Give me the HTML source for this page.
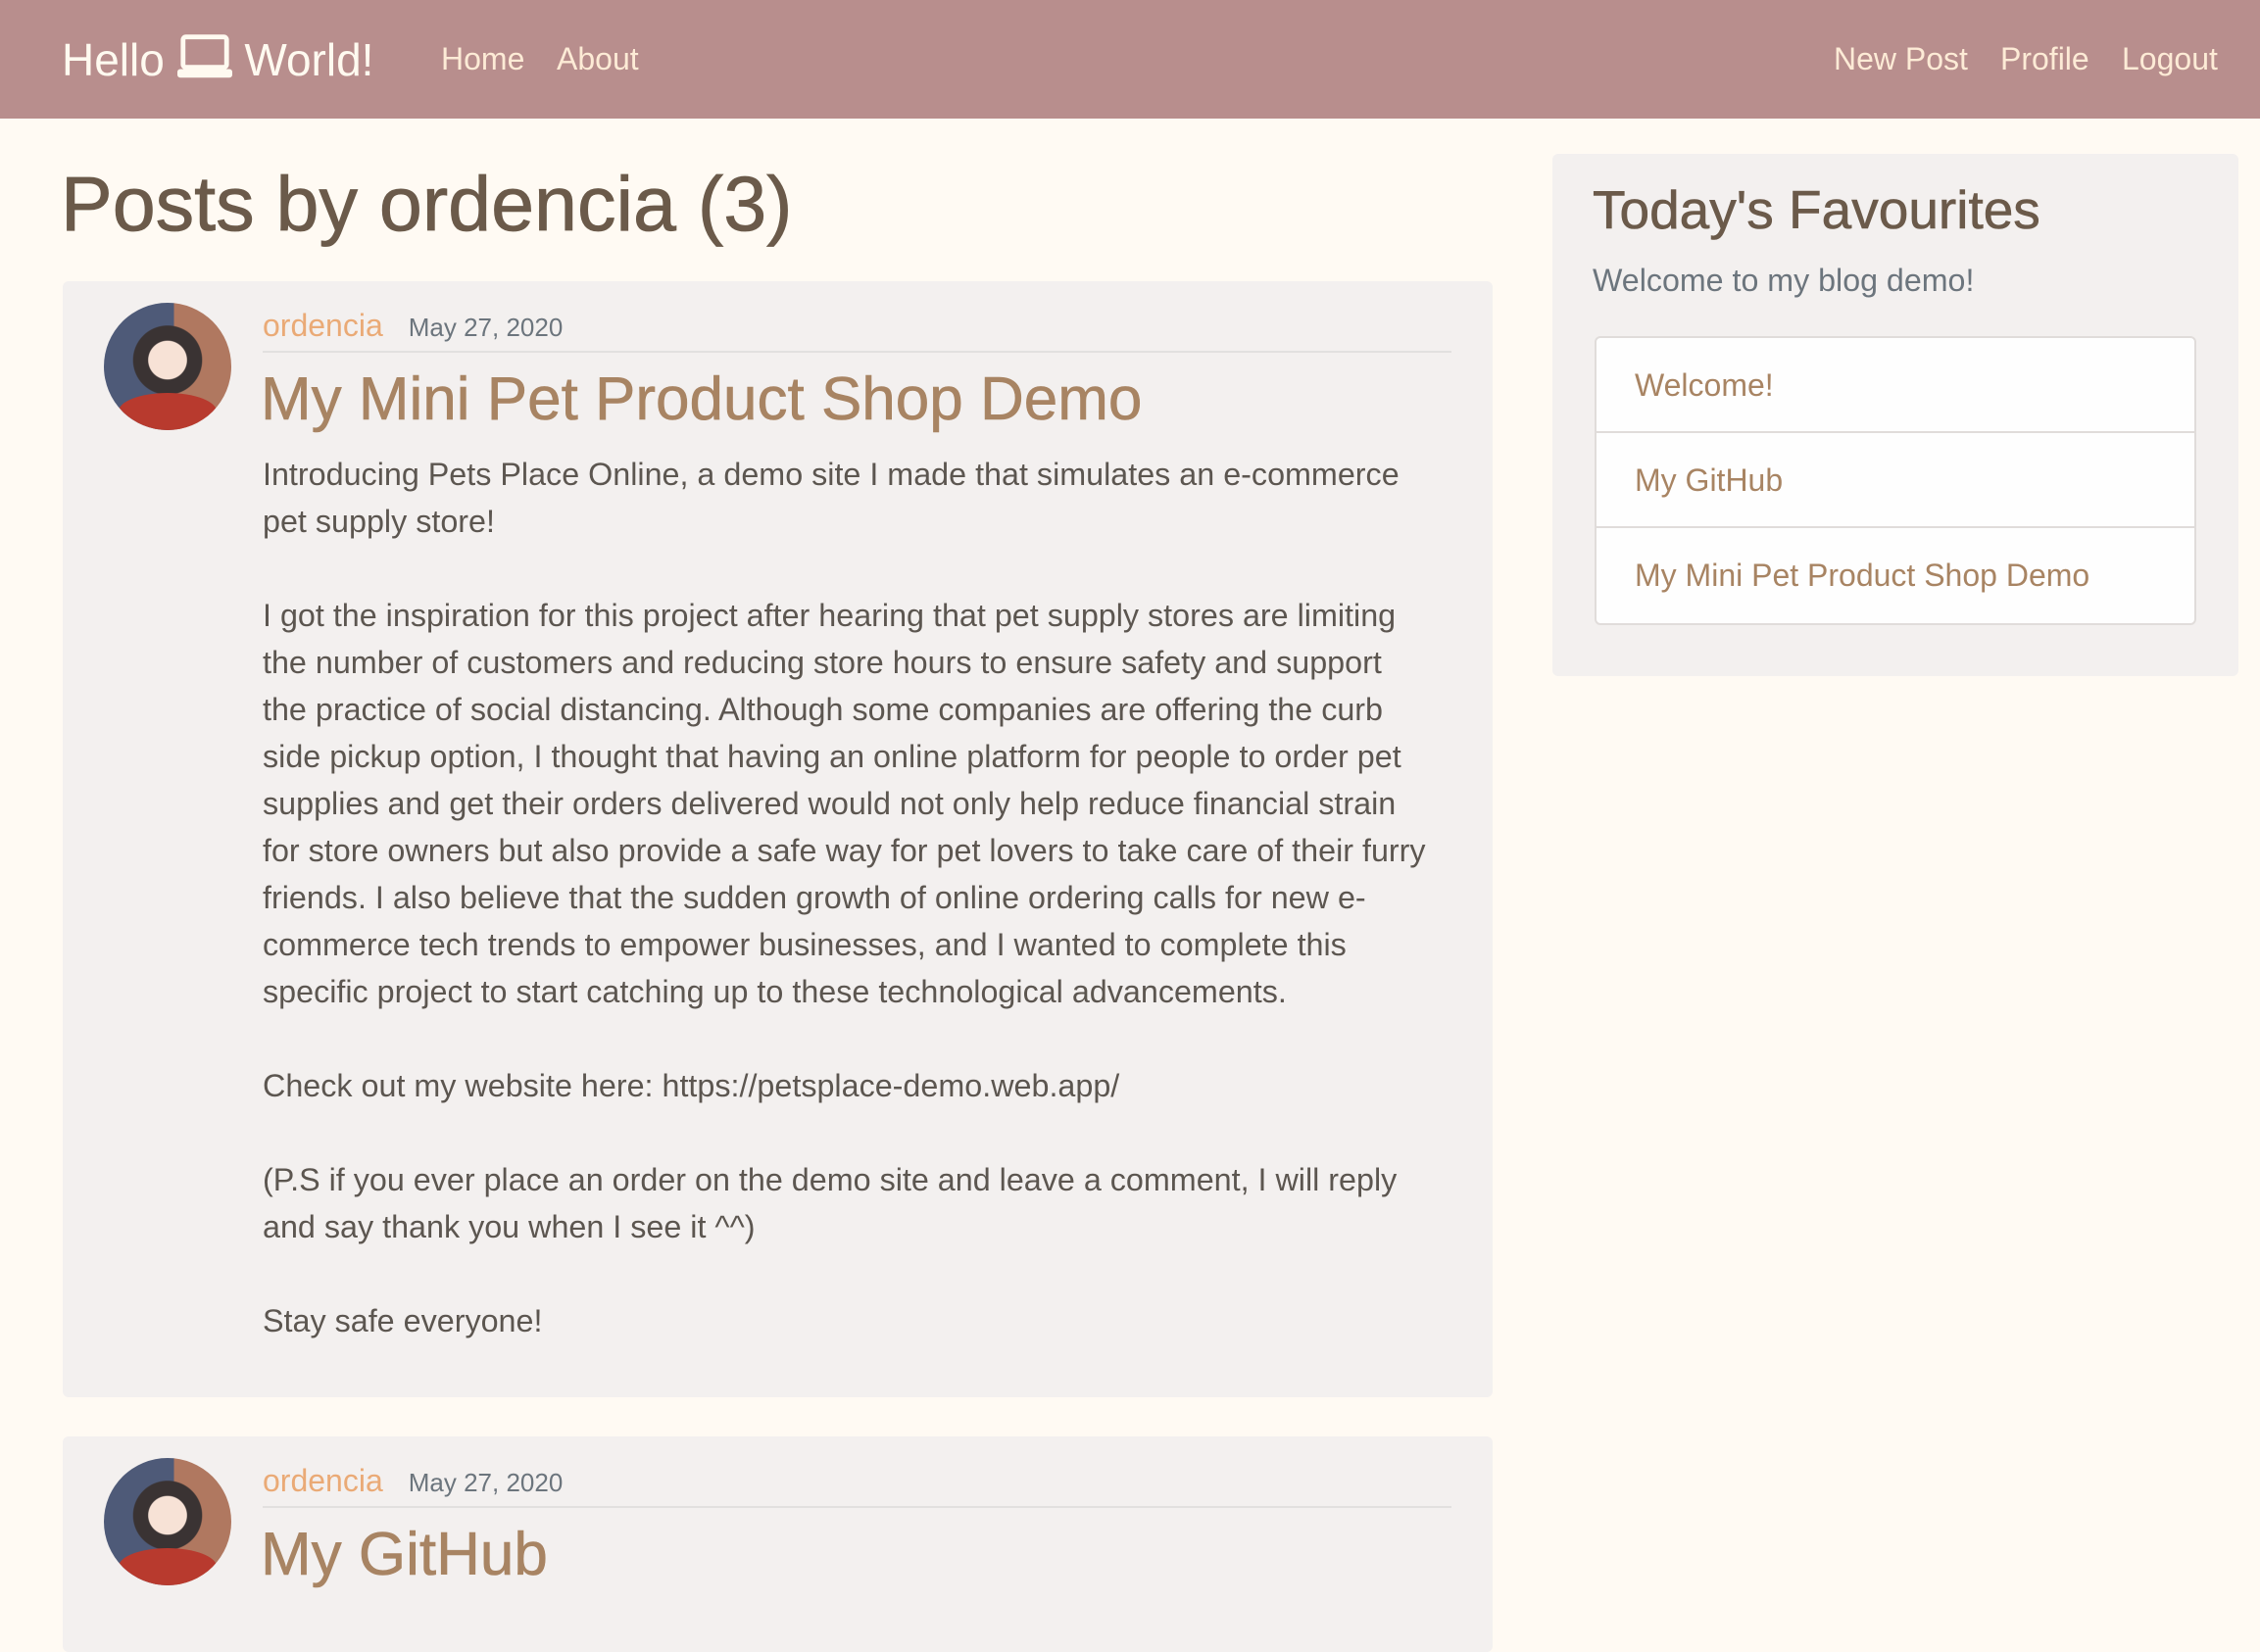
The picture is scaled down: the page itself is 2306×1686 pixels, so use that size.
<!DOCTYPE html>
<html><head><meta charset="utf-8"><style>
*{margin:0;padding:0;box-sizing:border-box}
body{width:2306px;height:1640px;overflow:hidden;background:#fffaf3;font-family:"Liberation Sans",sans-serif;position:relative}
.nav{position:absolute;left:0;top:0;width:2306px;height:121px;background:#b88e8d}
.a{position:absolute;white-space:nowrap}
.brand{color:#fffaf0;font-size:46px;top:34px}
.nl{color:#fdebd6;font-size:32px;top:42px}
.card{position:absolute;left:64px;width:1459px;background:#f3f0ef;border-radius:6px}
.av{position:absolute;left:106px;width:130px;height:130px;border-radius:50%;overflow:hidden;background:radial-gradient(circle at 50% 45%,#f7e2d6 0 20%,#3a3333 21% 36%,transparent 37%),linear-gradient(90deg,#4e5a78 0 55%,#b07860 55% 100%)}
.av:after{content:"";position:absolute;left:15px;bottom:0;width:100px;height:38px;background:#b83a2e;border-radius:50% 50% 0 0}
.on{color:#eaaa76;font-size:32px}
.dt{color:#6c757d;font-size:26px}
.hr{position:absolute;left:268px;width:1213px;height:2px;background:#e2e0df}
.tt{color:#a88463;font-size:62px}
.body{position:absolute;left:268px;top:460px;color:#5c5650;font-size:32.3px;line-height:48px;white-space:nowrap}
.side{position:absolute;left:1584px;top:157px;width:700px;height:533px;background:#f3f0ef;border-radius:6px}
.lg{position:absolute;left:1627px;top:343px;width:614px;height:295px;background:#fefefe;border:2px solid #e0dcda;border-radius:6px}
.li{height:97px;border-bottom:2px solid #e0dcda;color:#a88463;font-size:32px;padding-left:39px;line-height:97px}
</style></head><body>
<div class="nav"></div>
<div class="a brand" style="left:63px">Hello <svg width="56" height="46" viewBox="0 0 58 46" style="vertical-align:-4px"><rect x="6" y="2" width="46" height="32" rx="3" fill="none" stroke="#fffaf0" stroke-width="5"/><rect x="0" y="36" width="58" height="9" rx="3" fill="#fffaf0"/></svg> World!</div>
<div class="a nl" style="left:450px">Home</div>
<div class="a nl" style="left:568px">About</div>
<div class="a nl" style="left:1871px">New Post</div>
<div class="a nl" style="left:2041px">Profile</div>
<div class="a nl" style="left:2165px">Logout</div>

<div class="a" style="left:62px;top:162px;font-size:79px;color:#6b5a4a;-webkit-text-stroke:0.8px #6b5a4a">Posts by ordencia (3)</div>

<div class="card" style="top:287px;height:1139px"></div>
<div class="av" style="top:309px"></div>
<div class="a" style="left:268px;top:314px"><span class="on">ordencia</span><span class="dt" style="margin-left:26px">May 27, 2020</span></div>
<div class="hr" style="top:358px"></div>
<div class="a tt" style="left:266px;top:372px;-webkit-text-stroke:0.6px #a88463">My Mini Pet Product Shop Demo</div>
<div class="body">Introducing Pets Place Online, a demo site I made that simulates an e-commerce<br>pet supply store!<br><br>I got the inspiration for this project after hearing that pet supply stores are limiting<br>the number of customers and reducing store hours to ensure safety and support<br>the practice of social distancing. Although some companies are offering the curb<br>side pickup option, I thought that having an online platform for people to order pet<br>supplies and get their orders delivered would not only help reduce financial strain<br>for store owners but also provide a safe way for pet lovers to take care of their furry<br>friends. I also believe that the sudden growth of online ordering calls for new e-<br>commerce tech trends to empower businesses, and I wanted to complete this<br>specific project to start catching up to these technological advancements.<br><br>Check out my website here: https://petsplace-demo.web.app/<br><br>(P.S if you ever place an order on the demo site and leave a comment, I will reply<br>and say thank you when I see it ^^)<br><br>Stay safe everyone!</div>

<div class="card" style="top:1466px;height:220px"></div>
<div class="av" style="top:1488px"></div>
<div class="a" style="left:268px;top:1493px"><span class="on">ordencia</span><span class="dt" style="margin-left:26px">May 27, 2020</span></div>
<div class="hr" style="top:1537px"></div>
<div class="a tt" style="left:266px;top:1551px;-webkit-text-stroke:0.6px #a88463">My GitHub</div>

<div class="side"></div>
<div class="a" style="left:1625px;top:182px;font-size:55px;color:#6b5a4a;-webkit-text-stroke:0.6px #6b5a4a">Today's Favourites</div>
<div class="a" style="left:1625px;top:268px;font-size:32.2px;color:#6c757d">Welcome to my blog demo!</div>
<div class="lg"><div class="li">Welcome!</div><div class="li">My GitHub</div><div class="li" style="border:0">My Mini Pet Product Shop Demo</div></div>
</body></html>
